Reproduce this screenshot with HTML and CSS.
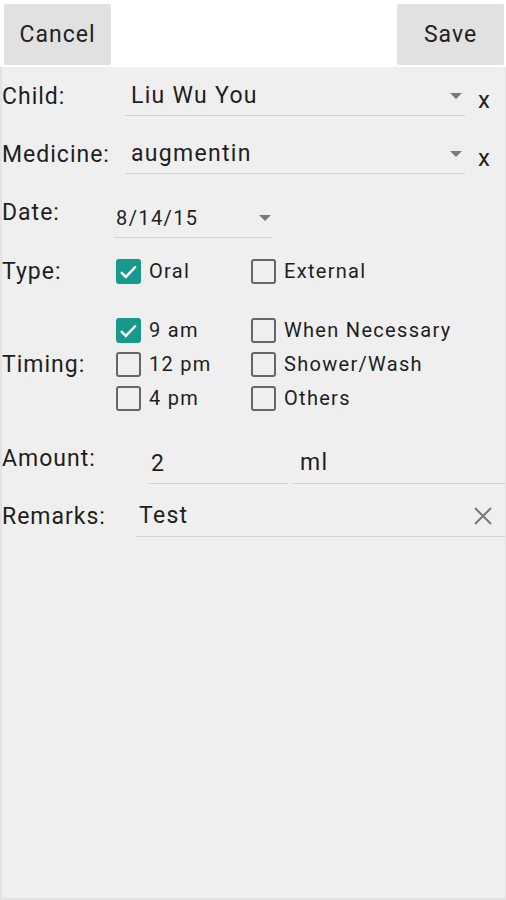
FILE: index.html
```html
<!DOCTYPE html>
<html>
<head>
<meta charset="utf-8">
<link rel="stylesheet" href="styles.css">
</head>
<body>
<div class="screen">
  <div class="topbar">
    <button class="btn">Cancel</button>
    <button class="btn">Save</button>
  </div>

  <div class="row row-child">
    <div class="label lw-spin">Child:</div>
    <div class="spinner sp-wide">
      <span class="val">Liu Wu You</span>
      <span class="arrow"></span>
    </div>
    <span class="clear">x</span>
  </div>

  <div class="row row-med">
    <div class="label lw-spin">Medicine:</div>
    <div class="spinner sp-wide">
      <span class="val">augmentin</span>
      <span class="arrow"></span>
    </div>
    <span class="clear">x</span>
  </div>

  <div class="row row-date">
    <div class="label lw-date">Date:</div>
    <div class="spinner sp-date">
      <span class="val small">8/14/15</span>
      <span class="arrow"></span>
    </div>
  </div>

  <div class="row row-type">
    <div class="label lw-chk">Type:</div>
    <div class="checks">
      <div class="chk col1"><span class="box on"><svg viewBox="0 0 24 24" width="25" height="25"><path d="M4.8 12.6l4.6 4.6 9.6-10" fill="none" stroke="#fff" stroke-width="2.3"/></svg></span>Oral</div>
      <div class="chk"><span class="box"></span>External</div>
    </div>
  </div>

  <div class="row row-timing">
    <div class="label lw-chk">Timing:</div>
    <div class="grid">
      <div class="chk"><span class="box on"><svg viewBox="0 0 24 24" width="25" height="25"><path d="M4.8 12.6l4.6 4.6 9.6-10" fill="none" stroke="#fff" stroke-width="2.3"/></svg></span>9 am</div>
      <div class="chk"><span class="box"></span>When Necessary</div>
      <div class="chk"><span class="box"></span>12 pm</div>
      <div class="chk"><span class="box"></span>Shower/Wash</div>
      <div class="chk"><span class="box"></span>4 pm</div>
      <div class="chk"><span class="box"></span>Others</div>
    </div>
  </div>

  <div class="row row-amount">
    <div class="label lw-amount">Amount:</div>
    <div class="field f-amount"><span class="val">2</span></div>
    <div class="field f-unit"><span class="val">ml</span></div>
  </div>

  <div class="row row-remarks">
    <div class="label lw-remarks">Remarks:</div>
    <div class="field f-remarks">
      <span class="val">Test</span>
      <svg class="xicon" viewBox="0 0 20 20" width="20" height="20"><path d="M2 2L18 18M18 2L2 18" stroke="#777" stroke-width="2" fill="none"/></svg>
    </div>
  </div>
</div>
</body>
</html>
```

FILE: styles.css
```css
html, body {
  margin: 0;
  padding: 0;
}
body {
  background: #efefef;
  font-family: Roboto, "Noto Sans", sans-serif;
  color: #212121;
}
.screen {
  width: 506px;
  height: 900px;
  box-sizing: border-box;
  background: #efefef;
  border-left: 2px solid #e3e3e3;
  border-right: 1px solid #e3e3e3;
  border-bottom: 2px solid #e3e3e3;
}
.topbar {
  height: 67px;
  background: #fff;
  display: flex;
  justify-content: space-between;
  align-items: flex-start;
  padding: 4px 2px 0 4px;
  box-sizing: border-box;
  margin-left: -2px;
  margin-right: -1px;
}
.btn {
  width: 107px;
  height: 61px;
  background: #e1e1e1;
  border: none;
  border-radius: 2px;
  font-family: Roboto, sans-serif;
  font-size: 23px;
  letter-spacing: 1px;
  color: #222;
  padding: 0;
  margin: 0;
}
.row {
  display: flex;
  align-items: center;
}
.label {
  font-size: 23px;
  letter-spacing: 1px;
  color: #1e1e1e;
  white-space: nowrap;
  flex: none;
}
.lw-spin { width: 123px; }
.lw-date { width: 112px; }
.lw-chk { width: 114px; }
.lw-amount { width: 146px; }
.lw-remarks { width: 134px; }

.val {
  font-size: 23px;
  letter-spacing: 1.3px;
  color: #1e1e1e;
}
.val.small { font-size: 20px; letter-spacing: 1.4px; }

.row-child, .row-med { height: 58px; }
.spinner {
  height: 40px;
  display: flex;
  align-items: center;
  justify-content: space-between;
  border-bottom: 1.5px solid #d3d3d3;
  box-sizing: border-box;
}
.sp-wide {
  width: 340px;
  padding-left: 6px;
  padding-right: 3px;
}
.arrow {
  width: 0;
  height: 0;
  border-left: 6px solid transparent;
  border-right: 6px solid transparent;
  border-top: 6px solid #7a7a7a;
}
.clear {
  font-size: 24px;
  color: #222;
  margin-left: 13px;
  padding-top: 8px;
}

.row-date {
  height: 58px;
  align-items: stretch;
}
.row-date .label { align-self: center; }
.sp-date {
  align-self: flex-end;
  margin-bottom: 3px;
  height: 42px;
  width: 158px;
  padding-left: 2px;
  padding-right: 1px;
  padding-top: 2px;
}

.row-type { height: 60px; }
.checks { display: flex; }
.chk {
  display: flex;
  align-items: center;
  font-size: 20px;
  letter-spacing: 1.3px;
  color: #1e1e1e;
  height: 34px;
  white-space: nowrap;
}
.checks .col1 { width: 135px; }
.box {
  width: 25px;
  height: 25px;
  box-sizing: border-box;
  border: 2px solid #666;
  border-radius: 3px;
  margin-right: 8px;
  display: flex;
  align-items: center;
  justify-content: center;
  flex: none;
}
.box.on {
  background: #179a8b;
  border: none;
}
.box svg { display: block; }

.row-timing {
  height: 126px;
  padding: 12px 0;
  box-sizing: border-box;
}
.grid {
  display: grid;
  grid-template-columns: 135px auto;
}

.row-amount {
  height: 62px;
  align-items: stretch;
}
.row-amount .label, .row-remarks .label { align-self: center; }
.field {
  align-self: flex-end;
  height: 42px;
  border-bottom: 1.5px solid #d3d3d3;
  box-sizing: border-box;
  display: flex;
  align-items: center;
}
.f-amount {
  margin-bottom: 5px;
  width: 140px;
  padding-left: 3px;
  padding-top: 2px;
}
.f-unit {
  margin-bottom: 5px;
  margin-left: 4px;
  flex: 1;
  padding-left: 8px;
}
.row-remarks {
  height: 54px;
  align-items: stretch;
}
.f-remarks {
  margin-bottom: 6px;
  flex: 1;
  padding-left: 3px;
  padding-right: 12px;
  justify-content: space-between;
}
.xicon { display: block; }
```
